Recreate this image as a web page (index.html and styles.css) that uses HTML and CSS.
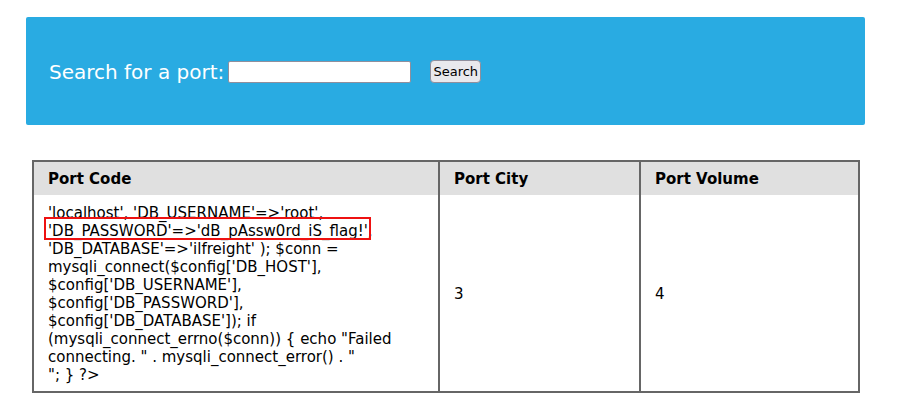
FILE: index.html
```html
<!DOCTYPE html>
<html>
<head>
<meta charset="utf-8">
<link rel="stylesheet" href="styles.css">
</head>
<body>
<div class="page">
  <div class="search-panel">
    <form class="search-form">
      <label class="search-label">Search for a port:</label>
      <input class="search-input" type="text">
      <button class="search-btn" type="button">Search</button>
    </form>
  </div>
  <table class="ports">
    <thead>
      <tr>
        <th class="col-code">Port Code</th>
        <th class="col-city">Port City</th>
        <th class="col-vol">Port Volume</th>
      </tr>
    </thead>
    <tbody>
      <tr>
        <td class="code-cell">'localhost', 'DB_USERNAME'=&gt;'root', <span class="mark">'DB_PASSWORD'=&gt;'dB_pAssw0rd_iS_flag!'</span>, 'DB_DATABASE'=&gt;'ilfreight' ); $conn = mysqli_connect($config['DB_HOST'], $config['DB_USERNAME'], $config['DB_PASSWORD'], $config['DB_DATABASE']); if (mysqli_connect_errno($conn)) { echo "Failed connecting. " . mysqli_connect_error() . "<br>"; } ?&gt;</td>
        <td>3</td>
        <td>4</td>
      </tr>
    </tbody>
  </table>
</div>
</body>
</html>
```

FILE: styles.css
```css
html, body {
  margin: 0;
  padding: 0;
  background: #ffffff;
}
body {
  font-family: "DejaVu Sans", sans-serif;
  font-size: 15px;
  color: #000;
}
.page {
  padding: 17px 32px 0 26px;
}
.search-panel {
  background: #29abe2;
  border-radius: 2px;
  height: 108px;
  display: flex;
  align-items: center;
  padding-left: 23px;
  box-sizing: border-box;
}
.search-form {
  display: flex;
  align-items: center;
  margin: 0;
  padding-top: 1px;
}
.search-label {
  color: #ffffff;
  font-size: 20px;
  margin-right: 4px;
}
.search-input {
  width: 183px;
  height: 22px;
  box-sizing: border-box;
  border: 1px solid #8f8f9d;
  border-radius: 2px;
  background: #fff;
  padding: 0 2px;
  margin: 0 19px 0 0;
}
.search-btn {
  font-family: "DejaVu Sans", sans-serif;
  font-size: 13px;
  height: 23px;
  width: 51px;
  padding: 0;
  background: #e9e9ed;
  border: 1px solid #8f8f9d;
  border-radius: 4px;
  color: #000;
}
.ports {
  margin: 35px 0 0 6px;
  width: 828px;
  border-collapse: collapse;
  border: 2px solid #666666;
  line-height: 18px;
}
.ports th {
  background: #e0e0e0;
  text-align: left;
  font-weight: bold;
  padding: 8px 14px 7px;
  border-left: 2px solid #666666;
  border-right: 2px solid #666666;
}
.ports td {
  padding: 9px 14px 7px;
  vertical-align: middle;
  border-left: 2px solid #666666;
  border-right: 2px solid #666666;
}
.col-code { width: 376px; }
.col-city { width: 171px; }
.col-vol { width: auto; }
.mark {
  position: relative;
}
.mark::after {
  content: "";
  position: absolute;
  left: -4px;
  right: -3px;
  top: -5px;
  bottom: 0;
  border: 2px solid #ee1111;
}
```
